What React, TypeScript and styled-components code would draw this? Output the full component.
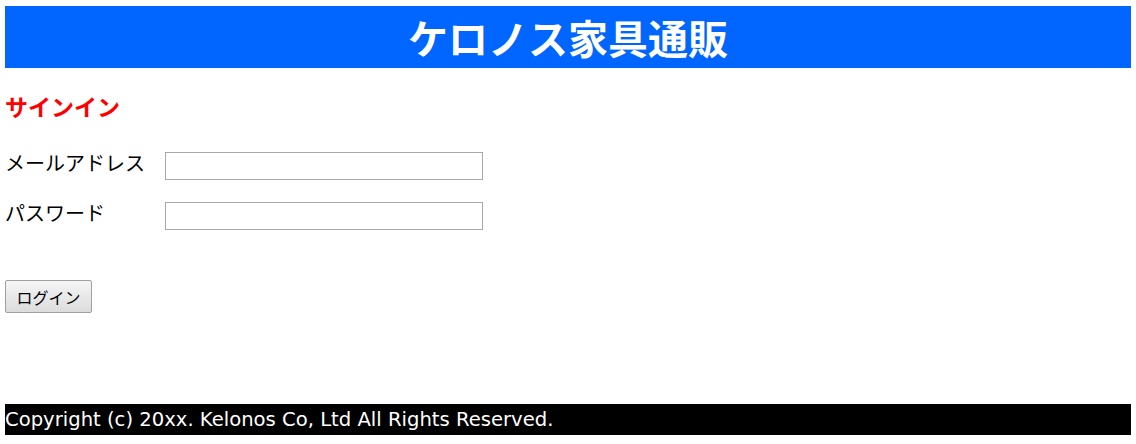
import React from "react";
import styled, { createGlobalStyle } from "styled-components";

const Global = createGlobalStyle`
  html, body { margin: 0; padding: 0; background: #fff; }
  body {
    padding: 6px 5px 0 5px;
    font-family: "Noto Sans CJK JP", "Noto Sans", sans-serif;
    color: #000;
  }
`;

const Header = styled.header`
  background: #0066ff;
  height: 62px;
  display: flex;
  align-items: center;
  justify-content: center;
`;

const Title = styled.h1`
  margin: 0;
  color: #fff;
  font-size: 40px;
  font-weight: 700;
  line-height: 1;
`;

const Main = styled.main`
  height: 336px;
  display: flex;
  flex-direction: column;
`;

const Heading = styled.h2`
  margin: 22px 0 30px 0;
  color: #ff0000;
  font-size: 23px;
  font-weight: 700;
  line-height: 32px;
`;

const Row = styled.div`
  display: flex;
  align-items: center;
  height: 28px;
  margin-bottom: 22px;
`;

const Label = styled.label`
  width: 160px;
  font-size: 20px;
  line-height: 28px;
  margin-top: -6px;
`;

const Input = styled.input`
  box-sizing: border-box;
  width: 318px;
  height: 28px;
  border: 1px solid #a9a9a9;
  padding: 2px 4px;
  font-size: 16px;
`;

const Button = styled.button`
  margin-top: 28px;
  align-self: flex-start;
  box-sizing: border-box;
  width: 87px;
  height: 33px;
  font-family: "Noto Sans CJK JP", sans-serif;
  font-size: 16px;
  border: 1px solid #a0a0a0;
  border-radius: 2px;
  background: linear-gradient(#f5f5f5, #dcdcdc);
  color: #000;
  padding: 0;
`;

const Footer = styled.footer`
  background: #000;
  color: #fff;
  height: 31px;
  font-size: 19.6px;
  line-height: 26px;
  font-family: "DejaVu Sans", "Noto Sans", sans-serif;
  display: flex;
  align-items: center;
`;

export default function App() {
  return (
    <>
      <Global />
      <Header>
        <Title>ケロノス家具通販</Title>
      </Header>
      <Main>
        <Heading>サインイン</Heading>
        <Row>
          <Label>メールアドレス</Label>
          <Input type="text" />
        </Row>
        <Row>
          <Label>パスワード</Label>
          <Input type="password" />
        </Row>
        <Button>ログイン</Button>
      </Main>
      <Footer>Copyright (c) 20xx. Kelonos Co, Ltd All Rights Reserved.</Footer>
    </>
  );
}
